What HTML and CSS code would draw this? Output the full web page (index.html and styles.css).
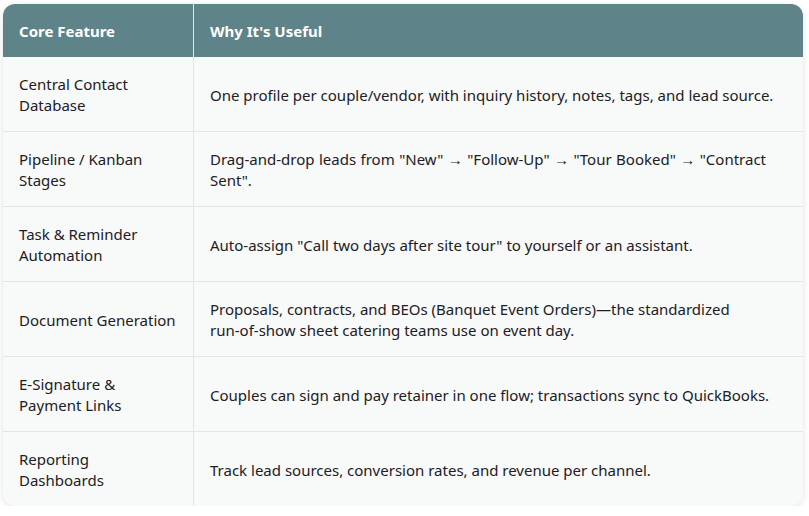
FILE: index.html
```html
<!DOCTYPE html>
<html>
<head>
<meta charset="utf-8">
<link rel="stylesheet" href="styles.css">
</head>
<body>
<div class="card">
<table class="tbl">
<thead>
<tr><th class="c1">Core Feature</th><th class="c2">Why It's Useful</th></tr>
</thead>
<tbody>
<tr><td class="c1">Central Contact Database</td><td class="c2">One profile per couple/vendor, with inquiry history, notes, tags, and lead source.</td></tr>
<tr><td class="c1">Pipeline / Kanban Stages</td><td class="c2 ws">Drag-and-drop leads from "New" → "Follow-Up" → "Tour Booked" → "Contract Sent".</td></tr>
<tr><td class="c1">Task &amp; Reminder Automation</td><td class="c2">Auto-assign "Call two days after site tour" to yourself or an assistant.</td></tr>
<tr><td class="c1">Document Generation</td><td class="c2">Proposals, contracts, and BEOs (Banquet Event Orders)—the standardized <span class="nw">run-of-show</span> sheet catering teams use on event day.</td></tr>
<tr><td class="c1">E-Signature &amp; Payment Links</td><td class="c2">Couples can sign and pay retainer in one flow; transactions sync to QuickBooks.</td></tr>
<tr><td class="c1">Reporting Dashboards</td><td class="c2">Track lead sources, conversion rates, and revenue per channel.</td></tr>
</tbody>
</table>
</div>
</body>
</html>
```

FILE: styles.css
```css
html, body {
  margin: 0;
  padding: 0;
  background: #ffffff;
}
body {
  padding: 4px 6px 0 3px;
  font-family: "Noto Sans", "Open Sans", sans-serif;
  color: #1c2025;
}
.card {
  width: 800px;
  border-radius: 12px;
  overflow: hidden;
  box-shadow: 0 1px 6px rgba(0, 0, 0, 0.12);
  background: #f8f9f9;
}
.tbl {
  width: 100%;
  border-collapse: collapse;
  table-layout: fixed;
  font-size: 15px;
  line-height: 21px;
}
.tbl th {
  background: #5e8388;
  color: #ffffff;
  font-weight: 700;
  text-align: left;
  padding: 17px 16px 15px;
}
.tbl td {
  padding: 17px 16px 15px;
  vertical-align: middle;
  border-top: 1px solid #e3e6e7;
  height: 42px;
}
.tbl tbody tr:first-child td { border-top: none; }
.c1 { width: 158px; border-right: 1px solid #e3e6e7; }
.tbl th.c1 { border-right: 1px solid #e1e8e9; }
.nw { white-space: nowrap; }
.ws { word-spacing: 0.55px; }
```
